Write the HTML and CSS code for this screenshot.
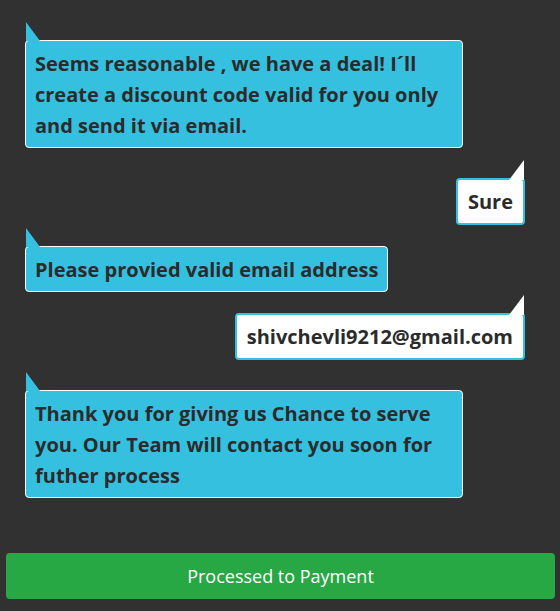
FILE: index.html
```html
<!DOCTYPE html>
<html>
<head>
<meta charset="utf-8">
<link rel="stylesheet" href="styles.css">
</head>
<body>
<div class="chat">
  <div class="msg bot">
    <div class="tail"></div>
    <div class="bubble wide">Seems reasonable , we have a deal! I´ll create a discount code valid for you only and send it via email.</div>
  </div>
  <div class="msg user gap-lg">
    <div class="tail"></div>
    <div class="bubble">Sure</div>
  </div>
  <div class="msg bot gap-xs">
    <div class="tail"></div>
    <div class="bubble">Please provied valid email address</div>
  </div>
  <div class="msg user gap-xs">
    <div class="tail"></div>
    <div class="bubble">shivchevli9212@gmail.com</div>
  </div>
  <div class="msg bot gap-lg">
    <div class="tail"></div>
    <div class="bubble wide">Thank you for giving us Chance to serve you. Our Team will contact you soon for futher process</div>
  </div>
</div>
<div class="actions">
  <button class="pay">Processed to Payment</button>
</div>
</body>
</html>
```
FILE: styles.css
```css
html, body {
  margin: 0;
  padding: 0;
  background: #313131;
}
body {
  width: 560px;
  height: 611px;
  font-family: "Open Sans", "Noto Sans", sans-serif;
}
.chat {
  display: flex;
  flex-direction: column;
  padding: 22px 35px 0 25px;
}
.msg {
  display: flex;
  flex-direction: column;
}
.msg.bot { align-items: flex-start; }
.msg.user { align-items: flex-end; }
.gap-lg { margin-top: 12px; }
.gap-xs { margin-top: 3px; }
.tail {
  width: 0;
  height: 0;
  position: relative;
  z-index: 1;
}
.bot .tail {
  border-top: 19px solid transparent;
  border-left: 14px solid #35c0e0;
  margin-left: 1px;
  margin-bottom: -1px;
}
.user .tail {
  border-top: 20px solid transparent;
  border-right: 15px solid #ffffff;
  margin-right: 1px;
  margin-bottom: -2px;
}
.bubble {
  font-size: 20px;
  font-weight: 700;
  line-height: 31px;
  color: #2b2b2b;
  border-radius: 4px;
}
.bot .bubble {
  background: #35c0e0;
  border: 1px solid #ffffff;
  padding: 7px 9px 6px;
}
.user .bubble {
  background: #ffffff;
  border: 2px solid #35c0e0;
  padding: 6px 10px;
}
.bubble.wide {
  width: 418px;
}
.actions {
  padding: 55px 5px 0 6px;
}
.pay {
  display: block;
  width: 100%;
  height: 46px;
  border: none;
  border-radius: 4px;
  background: #28a745;
  color: #ffffff;
  font-family: "Open Sans", "Noto Sans", sans-serif;
  font-size: 18px;
  font-weight: 400;
}
```
